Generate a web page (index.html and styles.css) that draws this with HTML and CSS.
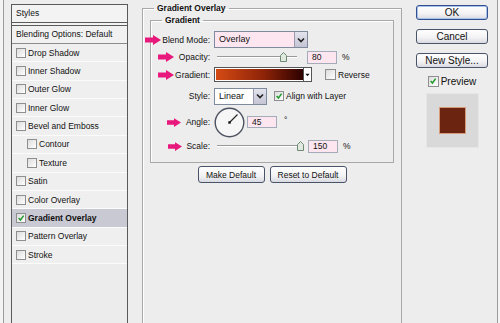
FILE: index.html
```html
<!DOCTYPE html>
<html lang="en">
  <head>
    <meta charset="UTF-8" />
    <title>Layer Style - Gradient Overlay</title>
    <link rel="stylesheet" href="styles.css">
  </head>
  <body>
    <div class="dialog">
      <!-- left list of layer effects -->
      <div class="styles-list">
        <div class="list-head">Styles</div>
        <div class="list-blend">Blending Options: Default</div>
        <ul class="effects">
          <li><span class="box"></span>Drop Shadow</li>
          <li><span class="box"></span>Inner Shadow</li>
          <li><span class="box"></span>Outer Glow</li>
          <li><span class="box"></span>Inner Glow</li>
          <li><span class="box"></span>Bevel and Emboss</li>
          <li class="sub"><span class="box"></span>Contour</li>
          <li class="sub"><span class="box"></span>Texture</li>
          <li><span class="box"></span>Satin</li>
          <li><span class="box"></span>Color Overlay</li>
          <li class="active">
            <span class="box"><svg viewBox="0 0 10 10"><path d="M2 5 L4.3 7.5 L8.3 2" /></svg></span>Gradient Overlay
          </li>
          <li><span class="box"></span>Pattern Overlay</li>
          <li><span class="box"></span>Stroke</li>
        </ul>
      </div>

      <!-- main settings -->
      <div class="main">
        <fieldset class="group">
          <legend>Gradient Overlay</legend>
          <fieldset class="group inner">
            <legend>Gradient</legend>
            <div class="rows">
              <div class="label">
                <svg class="arrow" viewBox="0 0 16 10"><polygon points="0,2.5 8,2.5 8,0 16,5 8,10 8,7.5 0,7.5" /></svg>
                Blend Mode:
              </div>
              <div class="ctrl">
                <div class="select blend">
                  <span class="value">Overlay</span>
                  <span class="drop"><svg viewBox="0 0 8 6"><path d="M1 1.5 L4 4.5 L7 1.5" /></svg></span>
                </div>
              </div>

              <div class="label">
                <svg class="arrow" viewBox="0 0 16 10"><polygon points="0,2.5 8,2.5 8,0 16,5 8,10 8,7.5 0,7.5" /></svg>
                <span class="gap-4">Opacity:</span>
              </div>
              <div class="ctrl">
                <div class="slider">
                  <span class="track"></span>
                  <svg class="thumb" style="left: 66px" viewBox="0 0 7 10"><path d="M0.5 3.5 L3.5 0.5 L6.5 3.5 L6.5 9.5 L0.5 9.5 Z" /></svg>
                </div>
                <span class="field">80</span>
                <span class="unit">%</span>
              </div>

              <div class="label">
                <svg class="arrow" viewBox="0 0 16 10"><polygon points="0,2.5 8,2.5 8,0 16,5 8,10 8,7.5 0,7.5" /></svg>
                Gradient:
              </div>
              <div class="ctrl">
                <div class="gradient">
                  <span class="ramp"></span>
                  <span class="mini-drop"><svg viewBox="0 0 6 4"><polygon points="0.5,0.5 5.5,0.5 3,3.5" /></svg></span>
                </div>
                <span class="box reverse"></span>
                <span class="check-label">Reverse</span>
              </div>

              <div class="label">Style:</div>
              <div class="ctrl">
                <div class="select style">
                  <span class="value">Linear</span>
                  <span class="drop"><svg viewBox="0 0 8 6"><path d="M1 1.5 L4 4.5 L7 1.5" /></svg></span>
                </div>
                <span class="box align"><svg viewBox="0 0 10 10"><path d="M2 5 L4.3 7.5 L8.3 2" /></svg></span>
                <span class="check-label">Align with Layer</span>
              </div>

              <div class="label">
                <svg class="arrow small" viewBox="0 0 16 10"><polygon points="0,2.5 8,2.5 8,0 16,5 8,10 8,7.5 0,7.5" /></svg>
                <span class="gap-4">Angle:</span>
              </div>
              <div class="ctrl">
                <svg class="dial" viewBox="0 0 31 31">
                  <circle cx="15.5" cy="15.5" r="14.3" />
                  <line x1="15.5" y1="15.5" x2="23.5" y2="7.5" />
                  <rect x="14.3" y="14.3" width="2.4" height="2.4" />
                </svg>
                <span class="field angle">45</span>
                <span class="degree">°</span>
              </div>

              <div class="label">
                <svg class="arrow small" viewBox="0 0 16 10"><polygon points="0,2.5 8,2.5 8,0 16,5 8,10 8,7.5 0,7.5" /></svg>
                <span class="gap-3">Scale:</span>
              </div>
              <div class="ctrl">
                <div class="slider">
                  <span class="track"></span>
                  <svg class="thumb" style="left: 83px" viewBox="0 0 7 10"><path d="M0.5 3.5 L3.5 0.5 L6.5 3.5 L6.5 9.5 L0.5 9.5 Z" /></svg>
                </div>
                <span class="field scale">150</span>
                <span class="unit">%</span>
              </div>
            </div>
          </fieldset>
          <div class="defaults">
            <button class="btn make">Make Default</button>
            <button class="btn reset">Reset to Default</button>
          </div>
        </fieldset>
      </div>

      <!-- dialog buttons + preview -->
      <div class="side">
        <button class="btn side-btn ok">OK</button>
        <button class="btn side-btn">Cancel</button>
        <button class="btn side-btn">New Style...</button>
        <div class="preview-row">
          <span class="box"><svg viewBox="0 0 10 10"><path d="M2 5 L4.3 7.5 L8.3 2" /></svg></span>
          <span class="check-label">Preview</span>
        </div>
        <div class="swatch"><span class="chip"></span></div>
      </div>
    </div>
  </body>
</html>
```

FILE: styles.css
```css
:root {
  --color-bg: #ededed;
  --color-text: #111111;
  --color-border: #5a5a5a;
  --color-group: #a8a8a8;
  --color-field: #fde6ef;
  --color-field-border: #a3acb8;
  --color-pink: #e8197c;
  --color-check: #1f9a2a;
}

body {
  margin: 0;
  height: 323px;
  overflow: hidden;
  background-color: #f4f4f4;
  font-family: "Liberation Sans", Arial, sans-serif;
  font-size: 8.5px;
  color: var(--color-text);
}

.dialog {
  display: flex;
  align-items: flex-start;
  margin-left: 3px;
  width: 495px;
  height: 323px;
  padding-left: 7px;
  box-sizing: border-box;
  border-left: 1px solid #9c9c9c;
  border-right: 1px solid #9c9c9c;
  background-color: var(--color-bg);
}

/* ---------- left list ---------- */

.styles-list {
  flex: none;
  width: 117px;
  height: 319px;
  margin-top: 4px;
  box-sizing: border-box;
  border: 1px solid var(--color-border);
  border-bottom: none;
  background-color: #ececec;
}

.list-head {
  height: 17px;
  line-height: 17px;
  padding-left: 4px;
  background-color: #f3f3f3;
  border-bottom: 4px double var(--color-border);
}

.list-blend {
  height: 17px;
  line-height: 17px;
  padding-left: 4px;
  background-color: #f1f1f1;
  border-bottom: 1px solid #8c8c8c;
}

.effects {
  list-style: none;
  margin: 0;
  padding: 0;
}

.effects li {
  display: flex;
  align-items: center;
  gap: 2px;
  height: 18.36px;
  box-sizing: border-box;
  padding-left: 4px;
  background-color: #efefef;
  border-bottom: 1px solid #fbfbfb;
}

.effects li.sub {
  padding-left: 15px;
}

.effects li.active {
  background-color: #c9c9d3;
  font-weight: bold;
}

.box {
  flex: none;
  display: inline-block;
  width: 10px;
  height: 10px;
  box-sizing: border-box;
  border: 1px solid #8e8e8e;
  background: linear-gradient(135deg, #dcdcdc, #ffffff);
}

.box svg {
  display: block;
  width: 8px;
  height: 8px;
  fill: none;
  stroke: var(--color-check);
  stroke-width: 1.8;
}

/* ---------- main area ---------- */

.main {
  flex: none;
  width: 260px;
  margin-left: 14px;
}

.group {
  margin: 3px 0 0;
  padding: 0;
  min-width: 0;
  height: 320px;
  box-sizing: border-box;
  border: 1px solid var(--color-group);
  border-bottom: none;
  box-shadow: inset 1px 1px 0 #ffffff;
}

.group legend {
  margin-left: 11px;
  padding: 0 3px;
  line-height: 10px;
  font-weight: bold;
}

.group.inner {
  height: auto;
  margin: 2px 7px 0;
  padding: 6px 0 5px;
  border-bottom: 1px solid var(--color-group);
}

.group.inner legend {
  margin-left: 11px;
}

.rows {
  display: grid;
  grid-template-columns: 59px 1fr;
  grid-template-rows: 17px 18px 17px 26px 26px 22px;
  column-gap: 4px;
}

.label {
  display: flex;
  align-items: center;
  justify-content: flex-end;
  gap: 1px;
  white-space: nowrap;
}

.gap-4 {
  margin-left: 4px;
}

.gap-3 {
  margin-left: 3px;
}

.arrow {
  flex: none;
  width: 16px;
  height: 10px;
  fill: var(--color-pink);
}

.arrow.small {
  width: 14px;
  height: 9px;
}

.ctrl {
  display: flex;
  align-items: center;
}

.select {
  display: flex;
  align-items: stretch;
  box-sizing: border-box;
  border: 1px solid #7f8a9c;
  background-color: var(--color-field);
}

.select.blend {
  width: 94px;
  height: 17px;
}

.select.style {
  width: 53px;
  height: 17px;
  background-color: #ffffff;
}

.select .value {
  flex: 1;
  padding-left: 4px;
  line-height: 15px;
  font-size: 9px;
}

.select .drop {
  flex: none;
  width: 12px;
  display: flex;
  align-items: center;
  justify-content: center;
  background: linear-gradient(#e4e4ee, #c4c4d4);
  border-left: 1px solid #9a9aae;
}

.select .drop svg {
  width: 8px;
  height: 6px;
  fill: none;
  stroke: #222;
  stroke-width: 1.6;
}

.slider {
  position: relative;
  flex: none;
  width: 87px;
  height: 12px;
}

.slider .track {
  display: block;
  margin: 5px 0 0 3px;
  width: 80px;
  height: 1px;
  background-color: #9a9a9a;
  border-bottom: 1px solid #ffffff;
}

.slider .thumb {
  position: absolute;
  top: 1px;
  width: 7px;
  height: 10px;
  fill: #dfe9df;
  stroke: #6f8a73;
  stroke-width: 1;
}

.field {
  flex: none;
  width: 30px;
  height: 13px;
  box-sizing: border-box;
  margin-left: 6px;
  padding-left: 4px;
  line-height: 11px;
  font-size: 8.5px;
  border: 1px solid var(--color-field-border);
  background-color: var(--color-field);
}

.field.angle {
  margin-left: 2px;
  height: 12px;
  line-height: 10px;
  margin-top: -1px;
}

.field.scale {
  margin-left: 7px;
}

.unit {
  margin-left: 5px;
}

.degree {
  margin-left: 7px;
  margin-top: -5px;
}

.gradient {
  flex: none;
  display: flex;
  width: 98px;
  height: 15px;
  box-sizing: border-box;
  border: 1px solid #555;
}

.gradient .ramp {
  flex: 1;
  background: linear-gradient(to right, #d44a14, #8e2308 55%, #2c0100);
  border: 1px solid #ffffff;
  border-right: none;
}

.gradient .mini-drop {
  flex: none;
  width: 7px;
  display: flex;
  align-items: center;
  justify-content: center;
  background-color: #ffffff;
  border-left: 1px solid #555;
}

.gradient .mini-drop svg {
  width: 5px;
  height: 4px;
  fill: #111;
}

.box.reverse {
  width: 11px;
  height: 11px;
  margin-left: 13px;
}

.box.align {
  margin-left: 7px;
}

.check-label {
  margin-left: 2px;
  white-space: nowrap;
}

.dial {
  flex: none;
  width: 31px;
  height: 31px;
}

.dial circle {
  fill: #f6f6f6;
  stroke: #4c5260;
  stroke-width: 1.4;
}

.dial line {
  stroke: #222;
  stroke-width: 1.1;
}

.dial rect {
  fill: #111;
}

.defaults {
  display: flex;
  justify-content: center;
  gap: 5px;
  margin-top: 3px;
}

.btn {
  box-sizing: border-box;
  margin: 0;
  padding: 0;
  font-family: "Liberation Sans", Arial, sans-serif;
  color: #111;
  border: 1px solid #4a5468;
  border-radius: 3px;
  background: linear-gradient(#ffffff, #f2f2f4 60%, #d9dae2);
}

.btn.make {
  width: 67px;
  height: 17px;
  font-size: 8.5px;
}

.btn.reset {
  width: 77px;
  height: 17px;
  font-size: 8.5px;
}

/* ---------- right side ---------- */

.side {
  flex: none;
  width: 72px;
  margin-left: 14px;
  margin-top: 5px;
  display: flex;
  flex-direction: column;
  align-items: center;
}

.side-btn {
  width: 72px;
  height: 15px;
  margin-bottom: 9px;
  font-size: 10px;
}

.side-btn.ok {
  border-color: #2f4f8f;
  box-shadow: inset 0 0 0 1px #a9c2ec;
}

.preview-row {
  display: flex;
  align-items: center;
  margin-top: -1px;
  font-size: 10px;
}

.preview-row .box {
  width: 11px;
  height: 11px;
}

.swatch {
  margin-top: 6px;
  width: 53px;
  height: 55px;
  box-sizing: border-box;
  display: flex;
  align-items: center;
  justify-content: center;
  background-color: #d9d9d9;
  border: 1px solid #e6e6e6;
}

.chip {
  width: 27px;
  height: 27px;
  box-sizing: border-box;
  background-color: #6b2410;
  border: 1px solid #d79a78;
}
```
